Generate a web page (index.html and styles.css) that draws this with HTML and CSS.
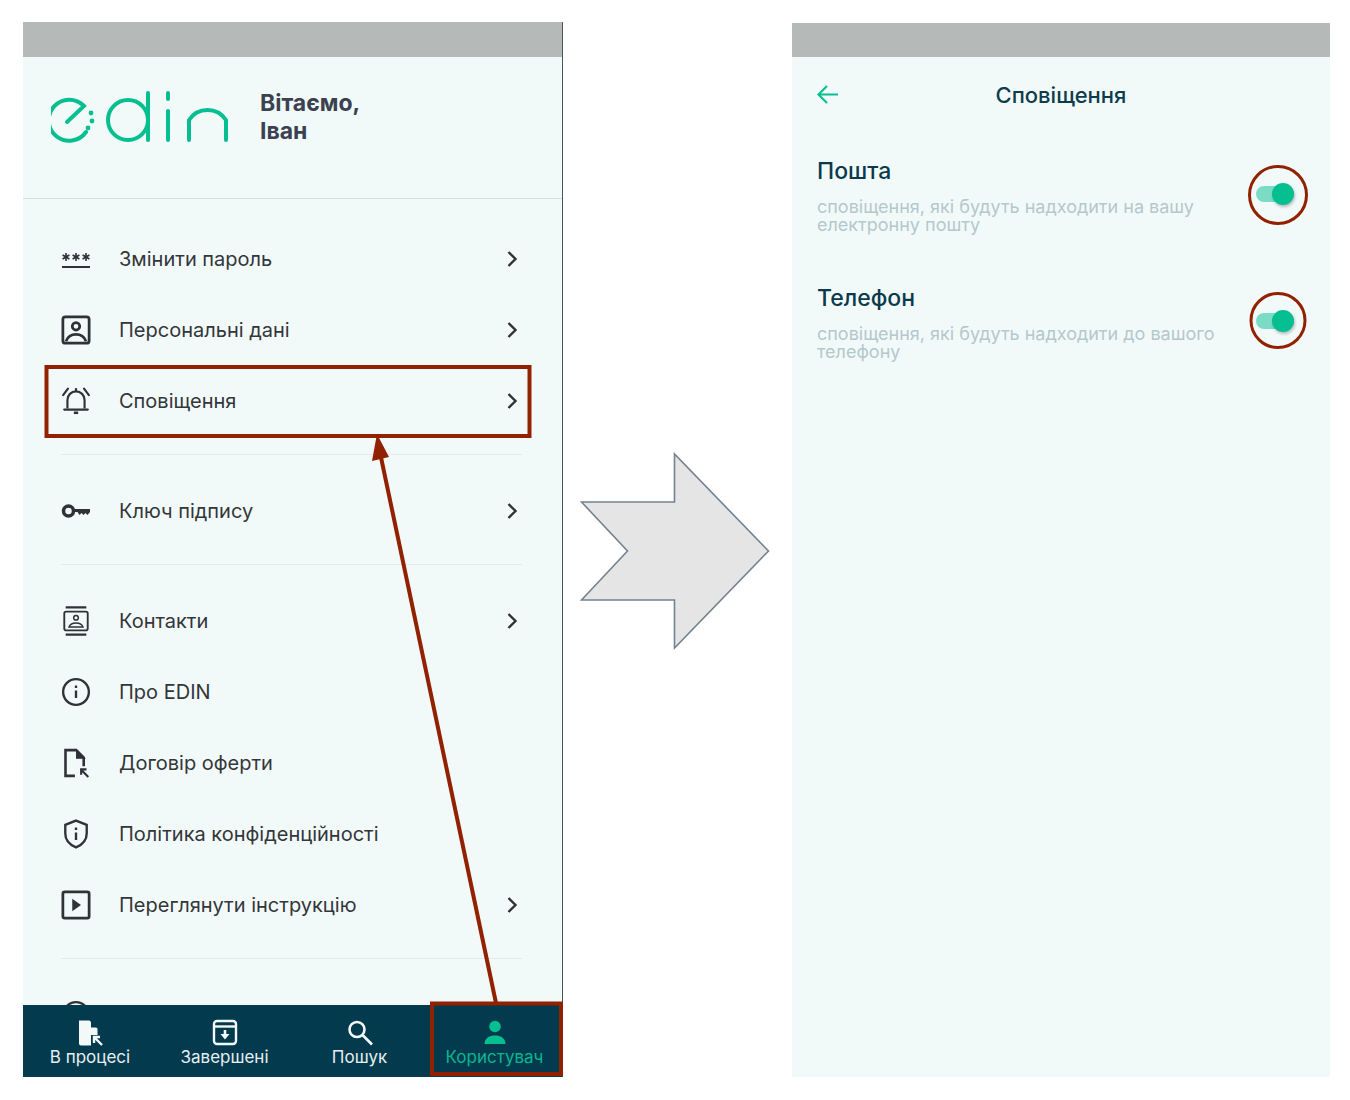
FILE: index.html
```html
<!DOCTYPE html>
<html lang="uk">
<head>
<meta charset="utf-8">
<title>EDIN</title>
<link rel="stylesheet" href="styles.css">
</head>
<body>
<div class="page">
  <section class="phone phone-left">
    <div class="status"></div>
    <header class="brand">
      <svg class="logo" viewBox="0 0 180 56" fill="none" stroke="#06bf91" stroke-width="4" stroke-linecap="round">
        <path d="M16 33 L33 17 A20.5 20.5 0 1 0 35 43"/>
        <circle cx="40" cy="24" r="2.4" fill="#06bf91" stroke="none"/>
        <circle cx="41" cy="32" r="2.4" fill="#06bf91" stroke="none"/>
        <circle cx="37" cy="39" r="2.4" fill="#06bf91" stroke="none"/>
        <circle cx="77" cy="31" r="20"/>
        <path d="M97 4 V51"/>
        <path d="M117 4 V10"/>
        <path d="M117 22 V51"/>
        <path d="M138 51 V31 A22 22 0 0 1 175 31 V51" transform="translate(0 0)"/>
      </svg>
      <div class="welcome">Вітаємо,<br>Іван</div>
    </header>
    <div class="menu">
      <div class="group">
        <div class="row">
          <svg class="ico" viewBox="0 0 30 24" fill="none" stroke="#2f3237"><path d="M1 20h28" stroke-width="2"/><g stroke-width="1.6"><path d="M5 6v8M1.6 8l6.8 4M8.4 8l-6.8 4"/><path d="M15 6v8M11.6 8l6.8 4M18.4 8l-6.8 4"/><path d="M25 6v8M21.6 8l6.8 4M28.4 8l-6.8 4"/></g></svg>
          <span class="label">Змінити пароль</span><svg class="chev" viewBox="0 0 12 18"><path d="M2.5 2l7 7-7 7"/></svg>
        </div>
        <div class="row">
          <svg class="ico" viewBox="0 0 24 24" fill="none" stroke="#2f3237" stroke-width="2.2"><rect x="1.5" y="1.5" width="21" height="21" rx="2"/><circle cx="12" cy="9" r="3"/><path d="M4 21c1.500-4 4.500-5.500 8-5.500s6.500 1.500 8 5.500"/></svg>
          <span class="label">Персональні дані</span><svg class="chev" viewBox="0 0 12 18"><path d="M2.5 2l7 7-7 7"/></svg>
        </div>
        <div class="row">
          <svg class="ico" viewBox="0 0 28 28" fill="none" stroke="#2f3237" stroke-width="2"><path d="M6 21V13a8 8 0 0 1 16 0v8"/><path d="M3 22h22" stroke-linecap="round"/><path d="M12 25h4" stroke-width="2.400"/><path d="M14 2v3"/><path d="M6.500 2.500 2 8.500M21.500 2.500l4.500 6" stroke-linecap="round"/></svg>
          <span class="label">Сповіщення</span><svg class="chev" viewBox="0 0 12 18"><path d="M2.5 2l7 7-7 7"/></svg>
        </div>
      </div>
      <div class="group">
        <div class="row">
          <svg class="ico" viewBox="0 0 30 20" fill="none" stroke="#2f3237"><circle cx="7.500" cy="10" r="5" stroke-width="3.500"/><path d="M12 8h17v3l-2.500 3-2-2-2 2-2-2-2 2-2-3h-5z" fill="#2f3237" stroke="none"/></svg>
          <span class="label">Ключ підпису</span><svg class="chev" viewBox="0 0 12 18"><path d="M2.5 2l7 7-7 7"/></svg>
        </div>
      </div>
      <div class="group">
        <div class="row">
          <svg class="ico" viewBox="0 0 28 32" fill="none" stroke="#2f3237" stroke-width="2"><path d="M3 1.500h22M3 30.500h22" stroke-width="2.400"/><rect x="1.500" y="6" width="25" height="20" rx="2"/><circle cx="14" cy="12.500" r="2.500" stroke-width="1.600"/><path d="M6.500 22.500c1-3.500 4-4.500 7.500-4.500s6.500 1 7.500 4.500z" stroke-width="1.600"/></svg>
          <span class="label">Контакти</span><svg class="chev" viewBox="0 0 12 18"><path d="M2.5 2l7 7-7 7"/></svg>
        </div>
        <div class="row">
          <svg class="ico" viewBox="0 0 28 28" fill="none" stroke="#2f3237" stroke-width="2.200"><circle cx="14" cy="14" r="12"/><path d="M14 12.500v7M14 8v2.200"/></svg>
          <span class="label">Про EDIN</span>
        </div>
        <div class="row">
          <svg class="ico" viewBox="0 0 28 28" fill="none" stroke="#2f3237" stroke-width="2.400"><path d="M13 26H4.200V2h10l7 7v8"/><path d="M14.500 2v7.500h7.500z" fill="#2f3237" stroke-width="1"/><path d="M19.500 21l6 6M18.800 25v-5h5" stroke-width="2"/></svg>
          <span class="label">Договір оферти</span>
        </div>
        <div class="row">
          <svg class="ico" viewBox="0 0 24 28" fill="none" stroke="#2f3237" stroke-width="2.200"><path d="M12 1.500 22 5.500v8c0 6-4 10.500-10 13-6-2.500-10-7-10-13v-8z"/><path d="M12 12.500v7M12 8v2.200"/></svg>
          <span class="label">Політика конфіденційності</span>
        </div>
        <div class="row">
          <svg class="ico" viewBox="0 0 24 24" fill="none" stroke="#2f3237" stroke-width="2.200"><rect x="1.500" y="1.500" width="21" height="21" rx="1.500"/><path d="M9 7l7 5-7 5z" fill="#2f3237" stroke="none"/></svg>
          <span class="label">Переглянути інструкцію</span><svg class="chev" viewBox="0 0 12 18"><path d="M2.5 2l7 7-7 7"/></svg>
        </div>
      </div>
      <div class="group">
        <div class="row">
          <svg class="ico" viewBox="0 0 28 28" fill="none" stroke="#2f3237" stroke-width="2.200"><circle cx="14" cy="14" r="12"/></svg>
        </div>
      </div>
    </div>
    <nav class="tabs">
      <div class="tab">
        <svg class="tab-ico" viewBox="0 0 28 28"><path d="M3 1.500h10.500l8 8V16H15v10.500H5a2 2 0 0 1-2-2z" fill="#f2f9f8"/><path d="M15 1.500v7h7z" fill="#033a4e"/><path d="M19 19l7 7M18 24v-6h6" stroke="#f2f9f8" stroke-width="2.400" fill="none"/></svg>
        <span>В процесі</span>
      </div>
      <div class="tab">
        <svg class="tab-ico" viewBox="0 0 28 28" fill="none" stroke="#f2f9f8" stroke-width="2.400"><rect x="3" y="2" width="22" height="23" rx="3"/><path d="M3 7.500h22"/><path d="M14 11v7" stroke-width="2.600"/><path d="M9.500 15h9L14 20.500z" fill="#f2f9f8" stroke="none"/></svg>
        <span>Завершені</span>
      </div>
      <div class="tab">
        <svg class="tab-ico" viewBox="0 0 28 28" fill="none" stroke="#f2f9f8" stroke-width="2.600"><circle cx="11" cy="10.500" r="7.500"/><path d="M16.500 16l9.500 9.500"/></svg>
        <span>Пошук</span>
      </div>
      <div class="tab tab-active">
        <svg class="tab-ico" viewBox="0 0 28 28" fill="#06bf91"><circle cx="14" cy="7.500" r="5.800"/><path d="M3.500 25c0-6 5-8.500 10.500-8.500S24.500 19 24.500 25z"/></svg>
        <span>Користувач</span>
      </div>
    </nav>
  </section>

  <svg class="big-arrow" viewBox="0 0 190 198"><path d="M1.500 50H94.500V2L188.500 99 94.500 196V148H1.500L47.500 99z"/></svg>

  <section class="phone phone-right">
    <div class="status"></div>
    <header class="title-bar">
      <svg class="back" viewBox="0 0 24 22" fill="none" stroke="#06bf91" stroke-width="2.200"><path d="M23 11H3M11.500 2 2.500 11l9 9"/></svg>
      <h1>Сповіщення</h1>
    </header>
    <div class="setting">
      <div class="setting-text">
        <h2>Пошта</h2>
        <p>сповіщення, які будуть надходити на вашу електронну пошту</p>
      </div>
      <div class="switch"><span class="knob"></span></div>
    </div>
    <div class="setting">
      <div class="setting-text">
        <h2>Телефон</h2>
        <p>сповіщення, які будуть надходити до вашого телефону</p>
      </div>
      <div class="switch"><span class="knob"></span></div>
    </div>
  </section>

  <svg class="marks" viewBox="0 0 1350 1100" fill="none" stroke="#922100">
    <rect x="46.500" y="367" width="483" height="69" stroke-width="4"/>
    <rect x="432" y="1003.500" width="129" height="70.500" stroke-width="4"/>
    <path d="M496 1003 380.500 455" stroke-width="4"/>
    <path d="M377 434 372 461 389 457z" fill="#922100" stroke="none"/>
    <circle cx="1278" cy="195" r="28.500" stroke-width="3"/>
    <circle cx="1278" cy="320.500" r="27" stroke-width="3"/>
  </svg>
</div>
</body>
</html>
```

FILE: styles.css
```css
* { box-sizing: border-box; }
html, body { margin: 0; padding: 0; background: #fff; }
body { font-family: "Inter", "Noto Sans", sans-serif; }

.page {
  position: relative;
  width: 1350px;
  height: 1100px;
  display: flex;
  align-items: flex-start;
  padding: 22px 0 0 23px;
  overflow: hidden;
}

.phone {
  background: #f2faf9;
  height: 1055px;
  display: flex;
  flex-direction: column;
  overflow: hidden;
}
.phone-left { width: 540px; border-right: 1px solid #4a5458; flex: none; }
.phone-right { width: 538px; height: 1054px; margin-top: 1px; flex: none; }

.status { height: 35px; background: #b5bab9; flex: none; }
.phone-right .status { height: 34px; }

.brand {
  height: 142px;
  flex: none;
  display: flex;
  align-items: flex-start;
  padding: 32px 0 0 28px;
  border-bottom: 1px solid #d6dfde;
}
.logo { width: 180px; height: 56px; flex: none; }
.welcome {
  margin-left: 29px;
  font-size: 23px;
  line-height: 28px;
  font-weight: 700;
  color: #3a4150;
}

.menu {
  flex: 1;
  min-height: 0;
  overflow: hidden;
  padding: 24px 40px 0 38px;
}
.group { border-bottom: 1px solid #e1eaec; padding-bottom: 18px; margin-bottom: 20px; }
.row {
  height: 71px;
  display: flex;
  align-items: center;
  position: relative;
}
.ico { width: 30px; height: 30px; flex: none; }
.label {
  margin-left: 28px;
  font-size: 20px;
  color: #33363a;
  flex: 1;
  white-space: nowrap;
}
.chev { width: 12px; height: 18px; flex: none; margin-right: 4px; fill: none; stroke: #2f3237; stroke-width: 2.400; }

.tabs {
  height: 72px;
  flex: none;
  background: #033a4e;
  display: grid;
  grid-template-columns: 134px 135px 135px 135px;
}
.tab {
  display: flex;
  flex-direction: column;
  align-items: center;
  padding-top: 14px;
  font-size: 17px;
  line-height: 20px;
  color: #e6eff0;
}
.tab-ico { width: 28px; height: 28px; margin-bottom: 0; }
.tab-active { color: #06b88f; }

.big-arrow {
  width: 190px;
  height: 198px;
  flex: none;
  margin: 430px 22px 0 17px;
  fill: #e5e5e5;
  stroke: #74828f;
  stroke-width: 1.600;
}

.title-bar {
  height: 76px;
  flex: none;
  position: relative;
  display: flex;
  align-items: center;
  justify-content: center;
}
.back { position: absolute; left: 24px; top: 27px; width: 23px; height: 21px; }
h1 { margin: 0; font-size: 22px; font-weight: 500; color: #0d3c4d; }

.setting {
  display: flex;
  align-items: flex-start;
  height: 127px;
  padding: 22px 22px 0 25px;
}
.setting-text { width: 410px; }
h2 { margin: 0 0 11px; font-size: 23px; line-height: 32px; font-weight: 500; color: #0b3a4c; }
p { margin: 0; font-size: 18px; line-height: 18px; color: #b4c8cd; }

.switch {
  position: relative;
  margin: 31px 0 0 29px;
  width: 38px;
  height: 16px;
  border-radius: 8px;
  background: #7bdcc6;
}
.knob {
  position: absolute;
  right: 0;
  top: -3px;
  width: 22px;
  height: 22px;
  border-radius: 50%;
  background: #06bf91;
  box-shadow: 1px 2px 3px rgba(0,0,0,.25);
}

.marks { position: absolute; inset: 0; width: 1350px; height: 1100px; pointer-events: none; }
```
